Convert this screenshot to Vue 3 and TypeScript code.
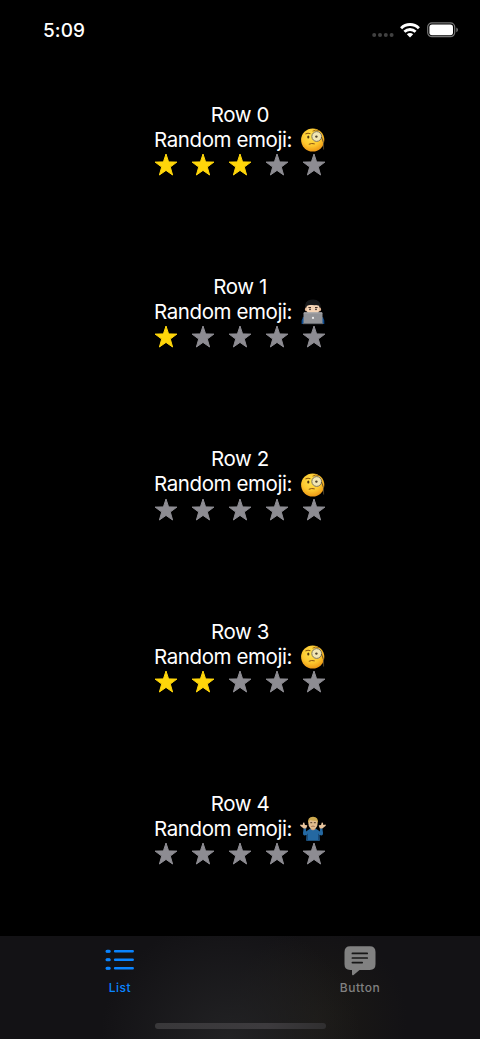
<script setup lang="ts">
type Emoji = 'monocle' | 'technologist' | 'shrug'

interface Row {
  id: number
  emoji: Emoji
  rating: number
}

const rows: Row[] = [
  { id: 0, emoji: 'monocle', rating: 3 },
  { id: 1, emoji: 'technologist', rating: 1 },
  { id: 2, emoji: 'monocle', rating: 0 },
  { id: 3, emoji: 'monocle', rating: 2 },
  { id: 4, emoji: 'shrug', rating: 0 },
]
</script>

<template>
  <div class="phone">
    <header class="status">
      <span class="time">5:09</span>
      <div class="indicators">
        <svg class="signal" width="22" height="6" viewBox="0 0 22 6">
          <circle v-for="n in 4" :key="n" :cx="n * 5.8 - 3.6" cy="3" r="2" fill="#414141" />
        </svg>
        <svg class="wifi" width="20" height="15" viewBox="0 0 20 15">
          <g fill="none" stroke="#fff" stroke-width="2.9">
            <path d="M1.1 5.2C6.1 .3 13.9 .3 18.9 5.2" />
            <path d="M4.4 8.7C7.6 5.7 12.4 5.7 15.6 8.7" />
          </g>
          <path d="M6.8 11.2C8.6 9.6 11.4 9.6 13.2 11.2L10 14.5Z" fill="#fff" />
        </svg>
        <svg class="battery" width="32" height="16" viewBox="0 0 32 16">
          <rect x=".7" y=".9" width="27" height="13.8" rx="4.2" fill="none" stroke="#777" stroke-width="1.2" />
          <rect x="2.4" y="2.6" width="23.6" height="10.6" rx="2.6" fill="#fff" />
          <path d="M29.3 5.4Q31 6.2 31 7.8T29.3 10.2Z" fill="#777" />
        </svg>
      </div>
    </header>

    <main class="list">
      <section v-for="row in rows" :key="row.id" class="row">
        <div class="title">Row {{ row.id }}</div>
        <div class="line">
          <span class="label">Random emoji:</span>
          <svg v-if="row.emoji === 'monocle'" class="emoji" viewBox="0 0 26 26">
            <defs>
              <radialGradient :id="`face${row.id}`" cx=".45" cy=".35" r=".68">
                <stop offset="0" stop-color="#ffe552" />
                <stop offset=".6" stop-color="#fdc62d" />
                <stop offset="1" stop-color="#eb9212" />
              </radialGradient>
            </defs>
            <circle cx="12.7" cy="13" r="11.6" :fill="`url(#face${row.id})`" />
            <ellipse cx="8.3" cy="9.9" rx="1.1" ry="1.5" fill="#51340d" />
            <path d="M5.4 7.1Q7.8 5.6 10.4 6.8" fill="none" stroke="#8a560d" stroke-width="1.1" />
            <path d="M12.6 4.2Q15.6 2 19.3 3.7" fill="none" stroke="#a16b13" stroke-width="1" />
            <circle cx="16.7" cy="9.5" r="4.9" fill="#f1e6b4" stroke="#7d755f" stroke-width="1" />
            <circle cx="16.4" cy="9.6" r="1.2" fill="#51452f" />
            <path d="M21.5 9.9Q24.4 15 23.6 22.5" fill="none" stroke="#54472d" stroke-width=".9" />
            <path d="M8.8 17.3Q11.7 15.9 14.7 16.9" fill="none" stroke="#8b5310" stroke-width="1" />
          </svg>
          <svg v-else-if="row.emoji === 'technologist'" class="emoji" viewBox="0 0 26 26">
            <path d="M1.6 25V21.8Q2.3 17.4 7 16.4H19Q23.5 17.2 24.3 21.8V25Z" fill="#0c4c91" />
            <path d="M5.7 10Q4.2 1 12.9 .9Q21.4 1 20.1 10Z" fill="#17191b" stroke="#34383a" stroke-width=".4" />
            <rect x="4.9" y="8.2" width="16.2" height="4.4" rx="2.1" fill="#e6b997" />
            <path d="M6.6 6.8Q12.8 4.6 19.2 6.8V11Q18.3 16.5 13 17Q7.7 16.5 6.6 11Z" fill="#f5d4b5" />
            <path d="M6.2 7.7Q6.8 5.7 10 5.5Q14 6.7 18.5 5.8L19.8 7.8V4Q18 .9 12.8 .9Q7.3 1 6.2 4Z" fill="#17191b" />
            <path d="M8.4 8.5H11M15 8.5H17.6" stroke="#483328" stroke-width="1" />
            <circle cx="10" cy="10.3" r=".9" fill="#392b27" />
            <circle cx="16" cy="10.3" r=".9" fill="#392b27" />
            <rect x="3.5" y="13.3" width="19" height="11.4" rx="1" fill="#929397" />
            <path d="M4 13.9H22" stroke="#b8b8ba" stroke-width=".7" />
            <circle cx="13" cy="18.9" r="1.1" fill="#eee" />
            <path d="M2.9 24.6H23.1" stroke="#67696d" stroke-width="1.1" />
          </svg>
          <svg v-else class="emoji" viewBox="0 0 26 26">
            <path d="M6.2 24.8L6.5 18.9L4.2 19.5Q2.6 18.9 3 16.7L3.7 12L6.1 12.4L6 15.4L10 12.7H16L20 15.4L19.9 12.4L22.3 12L23 16.7Q23.4 18.9 21.8 19.5L19.5 18.9L19.8 24.8Z" fill="#2468a1" />
            <path d="M7.5 17.8V24M18.5 17.8V24" stroke="#174a7b" />
            <path d="M3.7 12.5L.2 9.8L.4 8.6L2.6 9.1L3.1 6.7L4.2 6.5L5 9L7.2 9.3L7.1 10.2L6.1 12.6ZM22.3 12.5L25.8 9.8L25.6 8.6L23.4 9.1L22.9 6.7L21.8 6.5L21 9L18.8 9.3L18.9 10.2L19.9 12.6Z" fill="#e9c59d" />
            <path d="M10.5 10H15.5V13Q13 15.4 10.5 13Z" fill="#d2a57e" />
            <ellipse cx="13" cy="7.4" rx="4.6" ry="5.7" fill="#e2bd8e" />
            <path d="M8.3 7.4Q7.1 .7 13 .7Q18.9 .7 17.7 7.4L16.5 4.4Q13.7 5.3 9.9 4.1Z" fill="#cda94f" />
            <path d="M10.3 6.7H12.2M13.9 6.7H15.8" stroke="#503727" />
            <path d="M11.3 10.5Q13 9.7 14.7 10.5" fill="none" stroke="#935f46" stroke-width=".8" />
          </svg>
        </div>
        <div class="stars">
          <svg v-for="n in 5" :key="n" class="star" :class="{ filled: n <= row.rating }" viewBox="0 0 24 24">
            <path d="M12 1L14.6 8.9L22.9 9.1L16.3 14L18.6 22L12 17.4L5.4 22L7.7 14L1.1 9.1L9.4 8.9Z" />
          </svg>
        </div>
      </section>
    </main>

    <nav class="tabs">
      <div class="tab active">
        <svg class="tab-icon" width="30" height="32" viewBox="0 0 30 32">
          <g fill="none" stroke="currentColor" stroke-width="2.5" stroke-linecap="round">
            <path d="M2 7.2H4M10.1 7.2H27.7M2 15.7H4M10.1 15.7H27.7M2 24.2H4M10.1 24.2H27.7" />
            <path d="M2.1 7.2H4.2M2.1 15.7H4.2M2.1 24.2H4.2" stroke-width="3.1" />
          </g>
        </svg>
        <span>List</span>
      </div>
      <div class="tab">
        <svg class="tab-icon" width="32" height="32" viewBox="0 0 32 32">
          <path d="M6.2 2.3H25.8Q31.5 2.3 31.5 7.9V20.3Q31.5 26 25.8 26H15.5L9.9 30.8Q8 32.2 8 29.9V26H6.2Q.5 26 .5 20.3V7.9Q.5 2.3 6.2 2.3Z" fill="currentColor" />
          <path d="M8.4 9.4H23.2M8.4 14H23.2M8.4 18.6H18.2" fill="none" stroke="#171717" stroke-width="1.7" stroke-linecap="round" />
        </svg>
        <span>Button</span>
      </div>
      <div class="home-indicator"></div>
    </nav>
  </div>
</template>

<style>
body {
  background: #000;
}
</style>

<style scoped>
.phone {
  width: 480px;
  height: 1039px;
  display: flex;
  flex-direction: column;
  overflow: hidden;
  background: #000;
  color: #fff;
  font-family: Inter, 'Liberation Sans', sans-serif;
}
.status {
  height: 60px;
  flex: none;
  box-sizing: border-box;
  padding: 0 21px 0 43px;
  display: flex;
  align-items: center;
  justify-content: space-between;
}
.time {
  font-size: 19px;
  font-weight: 500;
  line-height: 24px;
  padding-top: 2px;
  letter-spacing: .1px;
}
.indicators {
  display: flex;
  align-items: center;
}
.signal {
  margin: 10px 6px 0 0;
}
.wifi {
  margin-right: 7px;
}
.battery {
  margin-top: 0;
}
.list {
  height: 876px;
  flex: none;
  box-sizing: border-box;
  padding-top: 41.7px;
  display: flex;
  flex-direction: column;
  gap: 97.35px;
}
.row {
  height: 75px;
  flex: none;
  display: flex;
  flex-direction: column;
  align-items: center;
  font-size: 20.5px;
  line-height: 25px;
  letter-spacing: -.4px;
}
.title {
  height: 25px;
}
.line {
  width: 172px;
  height: 25px;
  display: flex;
  align-items: center;
  justify-content: space-between;
}
.label {
  white-space: nowrap;
}
.emoji {
  width: 26px;
  height: 26px;
  flex: none;
  margin: 1.5px .4px 0 0;
}
.stars {
  height: 25px;
  margin-top: 1.2px;
  display: flex;
  align-items: center;
  gap: 13px;
}
.star {
  width: 24px;
  height: 24px;
  fill: #8d8c92;
  stroke: #8d8c92;
  stroke-width: 1;
  stroke-linejoin: round;
}
.star.filled {
  fill: #ffd60a;
  stroke: #ffd60a;
}
.tabs {
  position: relative;
  flex: 1;
  display: flex;
  background: radial-gradient(ellipse 130px 120px at 48% 100%, #222224, transparent), radial-gradient(ellipse 90px 90px at 66% 80%, #1c1a16, transparent), #131215;
}
.tab {
  flex: 1;
  display: flex;
  flex-direction: column;
  align-items: center;
  padding-top: 8px;
  color: #818181;
  font-size: 12px;
  font-weight: 450;
  line-height: 16px;
  letter-spacing: .5px;
}
.tab.active {
  color: #0a84ff;
}
.tab-icon {
  margin-bottom: 4px;
}
.home-indicator {
  position: absolute;
  left: 154.5px;
  bottom: 10px;
  width: 171px;
  height: 6px;
  border-radius: 3px;
  background: linear-gradient(90deg, #39383a, #3d3b3e 65%, #302f30);
}
</style>
